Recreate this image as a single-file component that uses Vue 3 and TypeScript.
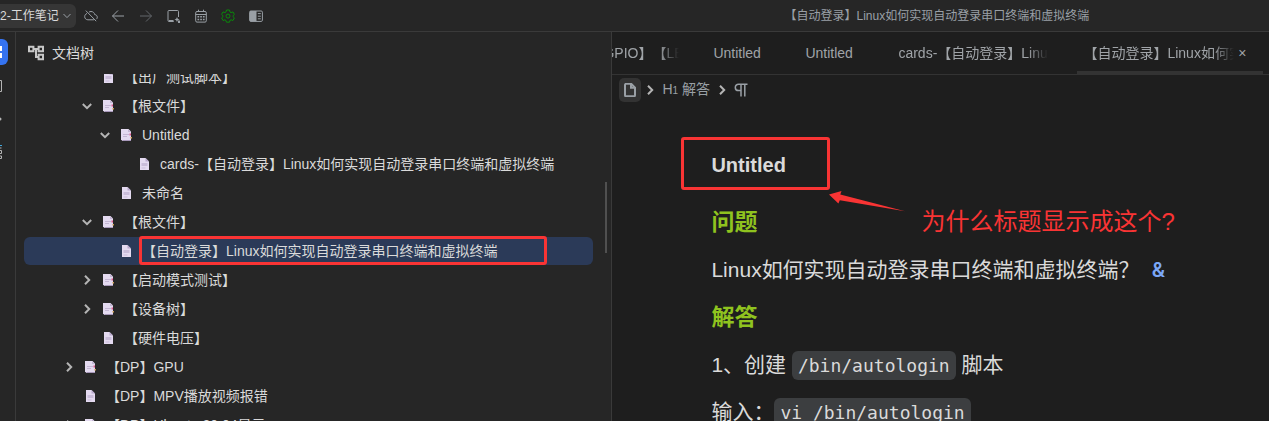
<script setup lang="ts">
interface TreeNode {
  title: string
  level: number
  icon: 'doc' | 'docs'
  toggle?: 'open' | 'closed'
  selected?: boolean
}

interface Tab {
  title: string
  kind: string
  active?: boolean
}

const docTitle = '【自动登录】Linux如何实现自动登录串口终端和虚拟终端'

const nodes: TreeNode[] = [
  { title: '【出厂测试脚本】', level: 1, icon: 'doc' },
  { title: '【根文件】', level: 1, icon: 'docs', toggle: 'open' },
  { title: 'Untitled', level: 2, icon: 'docs', toggle: 'open' },
  { title: 'cards-' + docTitle, level: 3, icon: 'doc' },
  { title: '未命名', level: 2, icon: 'doc' },
  { title: '【根文件】', level: 1, icon: 'docs', toggle: 'open' },
  { title: docTitle, level: 2, icon: 'doc', selected: true },
  { title: '【启动模式测试】', level: 1, icon: 'docs', toggle: 'closed' },
  { title: '【设备树】', level: 1, icon: 'docs', toggle: 'closed' },
  { title: '【硬件电压】', level: 1, icon: 'doc' },
  { title: '【DP】GPU', level: 0, icon: 'docs', toggle: 'closed' },
  { title: '【DP】MPV播放视频报错', level: 0, icon: 'doc' },
  { title: '【DP】Ubuntu 20.04显示', level: 0, icon: 'docs', toggle: 'closed' },
]

const tabs: Tab[] = [
  { title: '【GPIO】【LED】', kind: 'first' },
  { title: 'Untitled', kind: 'short' },
  { title: 'Untitled', kind: 'short' },
  { title: 'cards-' + docTitle, kind: 'long' },
  { title: docTitle, kind: 'current', active: true },
]
</script>

<template>
  <div class="app">
    <header class="toolbar">
      <button class="workspace" type="button">
        <span>2-工作笔记</span>
        <svg viewBox="0 0 10 10" width="10" height="10"><path d="M1.500 3l3.500 3.600L8.500 3" /></svg>
      </button>
      <nav class="tools">
        <button type="button" aria-label="同步">
          <svg viewBox="0 0 14 14" width="14" height="14">
            <path d="M3 4.500C1.500 5 .7 6.200.7 7.600c0 1.900 1.400 3.200 3.200 3.200h6M5 3.100c.6-.4 1.300-.6 2-.6 2 0 3.500 1.400 3.700 3.100 1.500.1 2.600 1.200 2.600 2.600 0 .9-.4 1.600-1 2M1.800 1.600l10.400 10.600" />
          </svg>
        </button>
        <button type="button" aria-label="后退">
          <svg viewBox="0 0 14 14" width="14" height="14"><path d="M13 7H1.500M7 1.500L1.500 7 7 12.500" /></svg>
        </button>
        <button type="button" class="dim" aria-label="前进">
          <svg viewBox="0 0 14 14" width="14" height="14"><path d="M1 7h11.500M7 1.500L12.500 7 7 12.500" /></svg>
        </button>
        <button type="button" aria-label="闪卡">
          <svg viewBox="0 0 14 14" width="14" height="14">
            <path d="M7.500 12.500H3a1 1 0 0 1-1-1V2.500a1 1 0 0 1 1-1h8.500a1 1 0 0 1 1 1V8" />
            <path class="solid" d="M11 8l.8 1.700 1.700.8-1.700.8L11 13l-.8-1.700-1.700-.8 1.700-.8zM12 11.500h2V14h-2zM2.500 11h5v2h-4z" />
          </svg>
        </button>
        <button type="button" aria-label="日历">
          <svg viewBox="0 0 14 14" width="14" height="14">
            <path d="M3 2.500h8a1.300 1.300 0 0 1 1.300 1.300v8a1.300 1.300 0 0 1-1.300 1.300H3a1.300 1.300 0 0 1-1.300-1.300v-8A1.300 1.300 0 0 1 3 2.500zM1.700 5.500h10.600M4.500.7v2M9.500.7v2" />
            <path stroke-width="1.500" d="M3.500 7.800h1.700M6.200 7.800h1.700M8.900 7.800h1.700M3.500 10.500h1.700M6.200 10.500h1.700M8.900 10.500h1.700" />
          </svg>
        </button>
        <button type="button" class="green" aria-label="设置">
          <svg viewBox="0 0 14 14" width="14" height="14">
            <path d="M5.500 1h3l.4 1.900 1.200.7 1.900-.7 1.400 2.500-1.400 1.300v1l1.400 1.200-1.400 2.600-1.900-.7-1.200.7-.4 1.700h-3l-.5-1.700-1.100-.7-1.900.7L.6 8.900 2 7.700v-1L.6 5.400 2 2.900l1.900.7L5 2.900z" />
            <circle cx="7" cy="7.100" r="2" />
          </svg>
        </button>
        <button type="button" aria-label="布局">
          <svg viewBox="0 0 14 14" width="14" height="14">
            <rect x=".6" y="2" width="12.800" height="10.400" rx="1.200" />
            <path class="solid" d="M1 2h6.500v10.400H1z" />
            <path d="M8.800 4.600h3M8.800 7.200h3M8.800 9.800h3" />
          </svg>
        </button>
      </nav>
      <div class="window-title">{{ docTitle }}</div>
    </header>

    <div class="body">
      <aside class="dock">
        <button class="dock-active" type="button" aria-label="文档树">
          <svg viewBox="0 0 4 12" width="4" height="12"><path d="M0 0h2v5H0zM0 7h2v5H0z" /></svg>
        </button>
        <button type="button" aria-label="大纲">
          <svg viewBox="0 0 4 14" width="4" height="14"><path d="M0 1.500h1.500v11H0" /></svg>
        </button>
        <button type="button" aria-label="书签">
          <svg viewBox="0 0 4 14" width="4" height="14"><circle class="dot" cx="0" cy="7" r="1.500" /></svg>
        </button>
        <button type="button" aria-label="标签">
          <svg viewBox="0 0 4 14" width="4" height="14">
            <path stroke="#3fa9e0" d="M0 .5h2" />
            <path d="M0 3h1.500M0 5.500h1.500v3H0M0 11h1.500v2.500H0" />
          </svg>
        </button>
      </aside>

      <section class="tree-panel">
        <h2 class="tree-head">
          <svg viewBox="0 0 16 16" width="16" height="16">
            <path d="M1 1.800h4.400v4.400H1zM10.600 1.800H15v4.400h-4.400zM10.600 9.800H15v4.400h-4.400zM5.400 4h5.200M8 4v8h2.600" />
          </svg>
          <span>文档树</span>
        </h2>
        <div class="tree-view">
          <ul class="tree">
            <li v-for="(n, i) in nodes" :key="i" :class="['row', 'level-' + n.level, { selected: n.selected }]">
              <span class="toggle">
                <svg v-if="n.toggle" :class="n.toggle" viewBox="0 0 10 10" width="10" height="10">
                  <path d="M3 .8L7.200 5 3 9.200" />
                </svg>
              </span>
              <svg v-if="n.icon === 'doc'" class="page" viewBox="0 0 12 12" width="12" height="12">
                <path fill="#e4daf0" d="M2 0h5.500L11 3.500V12H2z" />
                <path fill="#b9a9cd" d="M7.500 0v3.500H11z" />
                <path fill="#c9bcd9" d="M3.500 5h6v3h-6zM3.500 9.500h4v1h-4z" />
              </svg>
              <svg v-else class="page" viewBox="0 0 12 12" width="12" height="12">
                <path fill="#e4daf0" d="M1 0h7.500L11 2.500V12H2.500L1 10.500z" />
                <path fill="#c4b6d4" d="M8 0v3h3zM3 5h6v1H3zM3 7h4v1H3z" />
                <path fill="#a898ba" d="M2.500 11H11v1H2.500z" />
                <path fill="#d8588a" d="M9.500 4.500H11v2H9.500z" />
                <path fill="#c99a50" d="M10.500 8H12v1.500h-1.500z" />
              </svg>
              <span class="label">{{ n.title }}<i v-if="n.selected" class="mark" /></span>
            </li>
          </ul>
          <div class="scroll-thumb" />
        </div>
      </section>

      <main class="editor">
        <div class="tabs">
          <button v-for="(t, i) in tabs" :key="i" type="button" :class="['tab', t.kind]">
            <span class="tab-text">{{ t.title }}</span>
            <span v-if="t.active" class="close">×</span>
          </button>
        </div>
        <div class="crumbs">
          <button class="doc-btn" type="button" aria-label="文档">
            <svg viewBox="0 0 14 14" width="14" height="14">
              <path d="M3 .8h5.200l3.800 3.800v7.600a1 1 0 0 1-1 1H3a1 1 0 0 1-1-1V1.800a1 1 0 0 1 1-1zM8 .8v4h4" />
            </svg>
          </button>
          <svg class="sep" viewBox="0 0 10 10" width="10" height="10"><path d="M3 .8L7.200 5 3 9.200" /></svg>
          <span class="crumb">H<small>1</small> 解答</span>
          <svg class="sep" viewBox="0 0 10 10" width="10" height="10"><path d="M3 .8L7.200 5 3 9.200" /></svg>
          <svg class="para" viewBox="0 0 14 14" width="14" height="14">
            <path d="M13.500 1.200H4.500a3.200 3.200 0 0 0 0 6.400H7M7 1v12.500M10.800 1v12.500" />
          </svg>
        </div>
        <article class="content">
          <h1><span class="title">Untitled<i class="mark" /></span></h1>
          <h2>问题</h2>
          <p>Linux如何实现自动登录串口终端和虚拟终端？<a href="#ref">&amp;</a></p>
          <h2>解答</h2>
          <p>1、创建 <code>/bin/autologin</code> 脚本</p>
          <p>输入：<code>vi /bin/autologin</code></p>
          <div class="note">
            <svg viewBox="0 0 76 22" width="76" height="22">
              <path d="M0 3.500L12.500 0l-1.200 3.600L76 20.200 10.800 9.300 9.400 12.500z" />
            </svg>
            <span>为什么标题显示成这个?</span>
          </div>
        </article>
      </main>
    </div>
  </div>
</template>

<style>
body {
  margin: 0;
  background: #1e1e1e;
}
</style>

<style scoped>
.app {
  display: flex;
  flex-direction: column;
  height: 100vh;
  overflow: hidden;
  background: #262626;
  color: #dadada;
  font: 14px/20px "Liberation Sans", "Noto Sans CJK SC", sans-serif;
  text-spacing-trim: space-all;
}
button {
  display: flex;
  align-items: center;
  padding: 0;
  border: 0;
  background: none;
  color: inherit;
  font: inherit;
}
svg {
  flex: none;
  fill: none;
  stroke: currentColor;
}
ul, h1, h2, p {
  margin: 0;
  padding: 0;
  font-weight: normal;
}

.toolbar {
  display: flex;
  align-items: center;
  flex: none;
  height: 31px;
  border-bottom: 1px solid #3a3a3a;
  color: #9aa0a6;
}
.workspace {
  gap: 3px;
  height: 24px;
  padding-right: 4px;
  border-radius: 0 6px 6px 0;
  background: #363636;
  color: #dadada;
  font-size: 12px;
}
.workspace svg {
  color: #9aa0a6;
}
.tools {
  display: flex;
  justify-content: space-between;
  flex: none;
  width: 179px;
  margin-left: 8px;
}
.tools .dim {
  color: #62666a;
}
.tools .green {
  color: #0a8a0a;
}
.tools .solid {
  fill: currentColor;
  stroke: none;
}
.window-title {
  flex: 1;
  padding-left: 342px;
  text-align: center;
  font-size: 12px;
  white-space: nowrap;
}

.body {
  display: flex;
  flex: 1;
  min-height: 0;
}
.dock {
  display: flex;
  flex-direction: column;
  gap: 8px;
  flex: none;
  width: 15px;
  padding-top: 7px;
  box-sizing: border-box;
  color: #b4b4b4;
}
.dock button {
  width: 8px;
  height: 25px;
}
.dock .dock-active {
  height: 26px;
  border-radius: 0 6px 6px 0;
  background: #3573f0;
  color: #fff;
}
.dock .dock-active path,
.dock .dot {
  fill: currentColor;
  stroke: none;
}

.tree-panel {
  display: flex;
  flex-direction: column;
  flex: 0 0 calc(47% + 1px);
  min-width: 0;
  border: solid #3a3a3a;
  border-width: 0 1px;
  box-sizing: border-box;
}
.tree-head {
  display: flex;
  align-items: center;
  gap: 8px;
  height: 42px;
  padding-left: 12px;
  font-size: 14px;
}
.tree-head svg {
  stroke-width: 2;
  color: #c8c8c8;
}
.tree-view {
  position: relative;
  flex: 1;
  min-height: 0;
  overflow: hidden;
  padding: 0 18px 0 8px;
}
.tree {
  display: flex;
  flex-direction: column;
  gap: 1px;
  margin-top: -11px;
  list-style: none;
}
.row {
  display: flex;
  align-items: center;
  height: 28px;
  border-radius: 6px;
  white-space: nowrap;
}
.row.selected {
  background: #2b3a58;
}
.level-0 { padding-left: 34px; }
.level-1 { padding-left: 52px; }
.level-2 { padding-left: 70px; }
.level-3 { padding-left: 88px; }
.toggle {
  display: flex;
  justify-content: center;
  width: 22px;
  color: #b4b4b4;
}
.toggle svg {
  stroke-width: 2;
}
.toggle .open {
  transform: rotate(90deg);
}
.page {
  margin: 0 10px 0 4px;
  stroke: none;
}
.label {
  position: relative;
}
.mark {
  position: absolute;
  border: 3px solid #f93434;
  border-radius: 3px;
  box-sizing: border-box;
}
.label .mark {
  inset: -5px -50px -4px -3px;
}
.scroll-thumb {
  position: absolute;
  top: 108px;
  right: 4px;
  width: 2px;
  height: 71px;
  background: #505050;
}

.editor {
  display: flex;
  flex-direction: column;
  flex: 1;
  min-width: 0;
  background: #1e1e1e;
}
.tabs {
  display: flex;
  flex: none;
  height: 42px;
  border-bottom: 1px solid #333;
  overflow: hidden;
  color: #a0a4a8;
}
.tab {
  flex: none;
  padding: 0 23px;
  box-sizing: border-box;
  border-bottom: 3px solid transparent;
  border-top: 3px solid transparent;
}
.tab-text {
  overflow: hidden;
  white-space: nowrap;
  -webkit-mask-image: linear-gradient(to left, transparent, #000 20px);
  mask-image: linear-gradient(to left, transparent, #000 20px);
}
.tab.first {
  width: 79px;
  padding: 0 12px 0 0;
  justify-content: flex-end;
}
.tab.first .tab-text {
  flex: none;
  width: 90px;
}
.tab.short {
  width: 92px;
  padding: 0 22px;
}
.tab.short .tab-text {
  -webkit-mask-image: none;
  mask-image: none;
}
.tab.long {
  width: 202px;
  padding: 0 29px 0 23px;
}
.tab.current {
  width: 186px;
  padding: 0 17px 0 6px;
  border-bottom-color: #333;
}
.close {
  padding-left: 4px;
}
.crumbs {
  display: flex;
  align-items: center;
  flex: none;
  height: 30px;
  padding-left: 7px;
  color: #9aa0a6;
}
.doc-btn {
  justify-content: center;
  width: 22px;
  height: 24px;
  border-radius: 5px;
  background: #333;
}
.doc-btn svg {
  stroke-width: 2;
}
.sep {
  margin: 0 7px 0 4px;
  stroke-width: 2;
  color: #b4b4b4;
}
.crumb small {
  font-size: 10px;
}
.crumb + .sep {
  margin: 0 7px;
}
.para {
  stroke-width: 1.5;
}

.content {
  position: relative;
  flex: 1;
  min-height: 0;
  padding: 40px 20px 0 99px;
  font-size: 21px;
  line-height: 32px;
  white-space: nowrap;
}
.content h1 {
  margin-bottom: 21px;
  font-size: 20px;
  font-weight: bold;
  line-height: 40px;
}
.title {
  position: relative;
}
.title .mark {
  inset: -17px -44px -14px -30px;
}
.content h2 {
  margin-bottom: 16px;
  color: #8fc31f;
  font-size: 23px;
  font-weight: bold;
}
.content p {
  margin-bottom: 15px;
}
.content a {
  margin-left: 12px;
  color: #7ba7f7;
  font-family: Inter, sans-serif;
  font-size: 20px;
  font-weight: 600;
  line-height: 20px;
  text-decoration: none;
}
.content code {
  padding: 4px 6px;
  border-radius: 6px;
  background: #3c3e40;
  font: 18px/22px "DejaVu Sans Mono", monospace;
}
.note {
  position: absolute;
  top: 86px;
  left: 217px;
  display: flex;
  gap: 16px;
  color: #f93434;
  font-size: 24px;
}
.note svg path {
  fill: currentColor;
  stroke: none;
}
.note span {
  padding-top: 15px;
}
</style>
